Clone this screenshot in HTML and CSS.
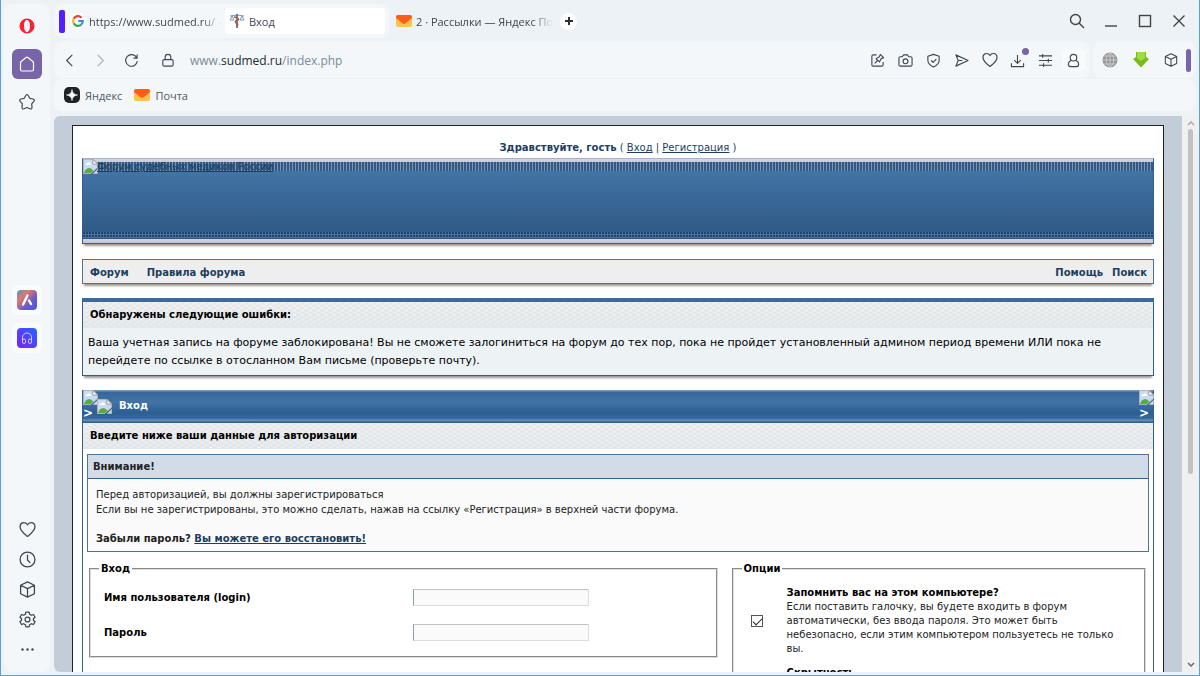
FILE: index.html
```html
<!DOCTYPE html>
<html lang="ru">
<head>
    <meta charset="UTF-8">
    <meta name="viewport" content="width=device-width, initial-scale=1.0">
    <title>Вход</title>
    <link rel="stylesheet" href="styles.css">
</head>
<body>
<svg class="defs" aria-hidden="true">
    <symbol id="i-mail" viewBox="0 0 16 12">
        <rect width="16" height="12" rx="2" fill="#ffc24d"/>
        <path d="M0 3V2Q0 0 2 0H14Q16 0 16 2V3L9.500 8.300Q8 9.500 6.500 8.300Z" fill="#ff5c1a"/>
    </symbol>
    <symbol id="i-broken" viewBox="0 0 16 16">
        <path d="M.5.500H11L15.500 5V9L8 15.500H.5Z" fill="#c9daf8" stroke="#b5b5b5"/>
        <path d="M2.500 6.500Q2.500 4.500 4.500 4.500Q6 2.500 8 4.500Q9.500 5 9 6.500Z" fill="#fff"/>
        <path d="M1 15Q2.500 10 6.500 9.500Q9.500 9.500 11 12.500L8 15Z" fill="#55ad3d"/>
        <path d="M10.500.500V5.500H15.500Z" fill="#fff" stroke="#999"/>
        <path d="M15.500 11V15.500H11Z" fill="#c9daf8" stroke="#b5b5b5"/>
    </symbol>
    <symbol id="i-heart" viewBox="0 0 16 16">
        <path d="M8 14.500C5.500 12.500 1 9.500 1 5.500C1 3 2.700 1.500 4.700 1.500C6.300 1.500 7.400 2.400 8 3.600C8.600 2.400 9.700 1.500 11.300 1.500C13.300 1.500 15 3 15 5.500C15 9.500 10.500 12.500 8 14.500Z"/>
    </symbol>
    <symbol id="i-cube" viewBox="0 0 16 16">
        <path d="M8 .8L14.500 4V12L8 15.200L1.500 12V4ZM1.500 4L8 7.200L14.500 4M8 7.200V15"/>
    </symbol>
</svg>

<div class="window">
    <aside class="sidebar">
        <button class="side-btn" aria-label="Меню">
            <svg width="16" height="16" viewBox="0 0 16 16"><path fill="#fa1e36" fill-rule="evenodd" d="M8 .5A7.500 7.500 0 1 1 8 15.500A7.500 7.500 0 1 1 8 .5ZM8 2C6.200 2 5 4.500 5 8S6.200 14 8 14S11 11.500 11 8S9.800 2 8 2Z"/></svg>
        </button>
        <button class="side-btn home" aria-label="Домой">
            <svg class="line" width="18" height="18" viewBox="0 0 18 18"><path d="M2.500 8Q2.500 7 3.500 6.200L8 2.500Q9 1.700 10 2.500L14.500 6.200Q15.500 7 15.500 8V14.500Q15.500 16 14 16H4Q2.500 16 2.500 14.500Z"/></svg>
        </button>
        <button class="side-btn star" aria-label="Закладки">
            <svg class="line" width="18" height="18" viewBox="0 0 18 18"><path d="M7.800 2.500Q9 .5 10.200 2.500L11.800 5.300L15 6Q17.200 6.600 15.800 8.400L13.700 10.800L14 14.200Q14 16.600 11.900 15.800L9 14.500L6.100 15.800Q4 16.600 4 14.200L4.300 10.800L2.200 8.400Q.8 6.600 3 6L6.200 5.300Z"/></svg>
        </button>
        <div class="side-apps">
            <button class="side-btn app" aria-label="Aria">
                <svg width="20" height="20" viewBox="0 0 20 20">
                    <defs><linearGradient id="aria" x1="0" y1="0" x2="1" y2="1"><stop offset="0" stop-color="#3c9be0"/><stop offset=".3" stop-color="#e0796a"/><stop offset=".65" stop-color="#6a5ac8"/><stop offset="1" stop-color="#4a55dd"/></linearGradient></defs>
                    <rect width="20" height="20" rx="4" fill="url(#aria)"/>
                    <path d="M10.500 5.500L6 14.500M12 10.500L14 14" stroke="#fff" stroke-width="2.400" stroke-linecap="round"/>
                </svg>
            </button>
            <button class="side-btn app" aria-label="Плеер">
                <svg width="20" height="20" viewBox="0 0 20 20">
                    <defs><linearGradient id="player" x1="0" y1="1" x2="1" y2="0"><stop offset="0" stop-color="#7a22ff"/><stop offset="1" stop-color="#2564ff"/></linearGradient></defs>
                    <rect width="20" height="20" rx="4" fill="url(#player)"/>
                    <path d="M5.500 13V9.500A4.500 4.500 0 0 1 14.500 9.500V13" fill="none" stroke="#d8c8ff"/>
                    <rect x="5.500" y="11" width="3" height="4.500" rx="1.500" fill="none" stroke="#d8c8ff"/>
                    <rect x="11.500" y="11" width="3" height="4.500" rx="1.500" fill="none" stroke="#d8c8ff"/>
                </svg>
            </button>
        </div>
        <div class="side-bottom">
            <button class="side-small" aria-label="Избранное"><svg class="line" width="17" height="17"><use href="#i-heart"/></svg></button>
            <button class="side-small" aria-label="История"><svg class="line" width="17" height="17" viewBox="0 0 16 16"><circle cx="8" cy="8" r="7"/><path d="M8 3.500V8.500L10.500 11"/></svg></button>
            <button class="side-small" aria-label="Расширения"><svg class="line" width="17" height="17"><use href="#i-cube"/></svg></button>
            <button class="side-small" aria-label="Настройки"><svg class="line" width="17" height="17" viewBox="0 0 16 16"><circle cx="8" cy="8" r="2.300"/><path d="M6.500 1H9.500L10 3L11.600 4L13.600 3.300L15.100 5.900L13.600 7.300V8.700L15.100 10.100L13.600 12.700L11.600 12L10 13L9.500 15H6.500L6 13L4.400 12L2.400 12.700L.9 10.100L2.400 8.700V7.300L.9 5.900L2.400 3.300L4.400 4L6 3Z"/></svg></button>
            <button class="side-small" aria-label="Ещё"><svg width="17" height="17" viewBox="0 0 17 17" fill="#3e474f"><circle cx="3.500" cy="8.500" r="1.200"/><circle cx="8.500" cy="8.500" r="1.200"/><circle cx="13.500" cy="8.500" r="1.200"/></svg></button>
        </div>
    </aside>

    <div class="main">
        <div class="tabs">
            <div class="tab-group">
                <span class="tab-mark"></span>
                <button class="tab google">
                    <span class="favicon"><svg width="12" height="12" viewBox="0 0 12 12" fill="none" stroke-width="2.200"><path d="M9.500 2.700A4.800 4.800 0 0 0 1.700 3.800" stroke="#ea4335"/><path d="M1.700 3.800A4.800 4.800 0 0 0 1.700 8.300" stroke="#fbbc05"/><path d="M1.700 8.300A4.800 4.800 0 0 0 9.300 9.500" stroke="#34a853"/><path d="M9.300 9.500A4.800 4.800 0 0 0 10.800 6H6.200" stroke="#4285f4"/></svg></span>
                    <span class="tab-text">https://www.sudmed.ru/ -</span>
                </button>
                <button class="tab active">
                    <svg width="16" height="16" viewBox="0 0 16 16" fill="none"><path d="M1 3L8 2L15 3M3 3L1 7H5ZM13 3L11 7H15Z" stroke="#7b98b5"/><path d="M8 1V15" stroke="#355b85" stroke-width="1.500"/><path d="M5 4Q11 5 9 7Q5 8 7 10Q10 11 8 13" stroke="#b4573c" stroke-width="1.400"/></svg>
                    <span>Вход</span>
                </button>
            </div>
            <button class="tab mail">
                <svg width="16" height="12"><use href="#i-mail"/></svg>
                <span class="tab-text">2 · Рассылки — Яндекс По</span>
            </button>
            <button class="new-tab" aria-label="Новая вкладка"><svg width="8" height="8" viewBox="0 0 8 8"><path d="M4 0V8M0 4H8" stroke="#26323a" stroke-width="2"/></svg></button>
            <div class="window-controls">
                <button aria-label="Поиск"><svg width="16" height="16" viewBox="0 0 16 16"><circle cx="6.500" cy="6.500" r="5"/><path d="M10 10L15 15"/></svg></button>
                <button aria-label="Свернуть"><svg width="16" height="16" viewBox="0 0 16 16"><path d="M2 13H14"/></svg></button>
                <button aria-label="Развернуть"><svg width="16" height="16" viewBox="0 0 16 16"><rect x="2.500" y="2.500" width="11" height="11"/></svg></button>
                <button aria-label="Закрыть"><svg width="16" height="16" viewBox="0 0 16 16"><path d="M2.500 2.500L13.500 13.500M13.500 2.500L2.500 13.500"/></svg></button>
            </div>
        </div>

        <div class="toolbar">
            <div class="address">
                <button class="tool" aria-label="Назад"><svg class="line" width="15" height="15" viewBox="0 0 16 16"><path d="M11 2L5 8L11 14"/></svg></button>
                <button class="tool off" aria-label="Вперёд"><svg class="line" width="15" height="15" viewBox="0 0 16 16"><path d="M5 2L11 8L5 14"/></svg></button>
                <button class="tool" aria-label="Обновить"><svg class="line" width="15" height="15" viewBox="0 0 16 16"><path d="M13.500 5A6.200 6.200 0 1 0 14.200 8.500M14 1.500V5.500H10"/></svg></button>
                <button class="tool lock" aria-label="Сведения о сайте"><svg class="line" width="15" height="15" viewBox="0 0 16 16"><rect x="3" y="7" width="11" height="7" rx="1.500"/><path d="M5.500 7V4.500A3 3 0 0 1 11.500 4.500V7"/></svg></button>
                <span class="url">www.<b>sudmed.ru</b>/index.php</span>
                <div class="tools">
                    <button class="tool" aria-label="Заметка"><svg class="line" width="15" height="15" viewBox="0 0 16 16"><path d="M7 2H3.500Q2 2 2 3.500V12.500Q2 14 3.500 14H12.500Q14 14 14 12.500V9.500M5 11L8 8M11 1.500L14.500 5L12 6L10 9.500L6.500 6L10 4Z"/></svg></button>
                    <button class="tool" aria-label="Снимок"><svg class="line" width="15" height="15" viewBox="0 0 16 16"><path d="M1 5.500Q1 4 2.500 4H4.500L6 2H10L11.500 4H13.500Q15 4 15 5.500V12.500Q15 14 13.500 14H2.500Q1 14 1 12.500Z"/><circle cx="8" cy="8.800" r="2.600"/></svg></button>
                    <button class="tool" aria-label="Защита"><svg class="line" width="15" height="15" viewBox="0 0 16 16"><path d="M8 1.500L14 3.500V8Q14 12 8 15Q2 12 2 8V3.500ZM5.500 8L7.500 10L11 6.500"/></svg></button>
                    <button class="tool" aria-label="Отправить"><svg class="line" width="15" height="15" viewBox="0 0 16 16"><path d="M2 2L15 8L2 14L4.500 8ZM4.500 8H9"/></svg></button>
                    <button class="tool" aria-label="Сердце"><svg class="line" width="16" height="16"><use href="#i-heart"/></svg></button>
                    <button class="tool download" aria-label="Загрузки"><svg class="line" width="15" height="15" viewBox="0 0 16 16"><path d="M8 2V11M4.500 7.500L8 11L11.500 7.500M1.500 11V14.500H14.500V11"/></svg></button>
                    <button class="tool" aria-label="Настройка"><svg class="line" width="15" height="15" viewBox="0 0 16 16"><path d="M1 3H15M1 8H15M1 13H15M5 1V5M11 6V10M6 11V15"/></svg></button>
                    <button class="tool person" aria-label="Профиль"><svg class="line" width="15" height="15" viewBox="0 0 16 16"><circle cx="8" cy="5" r="3.500"/><path d="M5 8Q2.500 9.500 2.500 12Q2.500 14.500 5 14.500H11Q13.500 14.500 13.500 12Q13.500 9.500 11 8"/></svg></button>
                </div>
            </div>
            <div class="extensions">
                <button class="tool" aria-label="Глобус"><svg width="16" height="16" viewBox="0 0 16 16"><circle cx="8" cy="8" r="7.500" fill="#969696"/><path d="M.5 8H15.500M2 4H14M2 12H14M8 .5V15.500M8 .5C3 4 3 12 8 15.500M8 .5C13 4 13 12 8 15.500" fill="none" stroke="#d5d5d5" stroke-width=".8"/></svg></button>
                <button class="tool" aria-label="Скачать"><svg width="16" height="16" viewBox="0 0 16 16"><path d="M3 0H13V5L16 7L8 15.500L0 7L3 5Z" fill="#79bb1d"/><path d="M4 0H12V6L8 9L4 6Z" fill="#a2dc45"/></svg></button>
                <button class="tool" aria-label="Расширения"><svg class="line" width="14" height="14"><use href="#i-cube"/></svg></button>
                <span class="side-mark"></span>
            </div>
        </div>

        <nav class="bookmarks">
            <a href="#"><svg width="16" height="16" viewBox="0 0 16 16"><rect width="16" height="16" rx="5" fill="#202225"/><path d="M8 2.500Q8.500 7.500 13.500 8Q8.500 8.500 8 13.500Q7.500 8.500 2.500 8Q7.500 7.500 8 2.500Z" fill="#fff" stroke="#fff" stroke-width=".6"/></svg>Яндекс</a>
            <a href="#"><svg width="16" height="12"><use href="#i-mail"/></svg>Почта</a>
        </nav>

        <div class="viewport">
            <div class="page">
                <div class="wrapper">
                    <div class="greeting"><b>Здравствуйте, гость</b> ( <a href="#">Вход</a> | <a href="#">Регистрация</a> )</div>

                    <header class="banner">
                        <a href="#" class="logo"><svg width="15" height="15"><use href="#i-broken"/></svg><span>Форум судебных медиков России</span></a>
                    </header>

                    <nav class="menu">
                        <a href="#">Форум</a>
                        <a href="#">Правила форума</a>
                        <a href="#" class="help">Помощь</a>
                        <a href="#">Поиск</a>
                    </nav>

                    <section class="errors">
                        <h2 class="subtitle">Обнаружены следующие ошибки:</h2>
                        <p>Ваша учетная запись на форуме заблокирована! Вы не сможете залогиниться на форум до тех пор, пока не пройдет установленный админом период времени ИЛИ пока не перейдете по ссылке в отосланном Вам письме (проверьте почту).</p>
                    </section>

                    <section class="login">
                        <div class="login-title">
                            <span class="edge"><svg width="15" height="15"><use href="#i-broken"/></svg>&gt;</span>
                            <svg width="15" height="15"><use href="#i-broken"/></svg>
                            <h1>Вход</h1>
                            <span class="edge"><svg width="15" height="15"><use href="#i-broken"/></svg>&gt;</span>
                        </div>
                        <h2 class="subtitle">Введите ниже ваши данные для авторизации</h2>

                        <div class="notice">
                            <h3>Внимание!</h3>
                            <div class="notice-body">
                                <p>Перед авторизацией, вы должны зарегистрироваться<br>Если вы не зарегистрированы, это можно сделать, нажав на ссылку «Регистрация» в верхней части форума.</p>
                                <p><b>Забыли пароль? <a href="#">Вы можете его восстановить!</a></b></p>
                            </div>
                        </div>

                        <form class="forms">
                            <fieldset class="account">
                                <legend>Вход</legend>
                                <div class="row">
                                    <label for="login">Имя пользователя (login)</label>
                                    <input type="text" id="login">
                                </div>
                                <div class="row">
                                    <label for="password">Пароль</label>
                                    <input type="password" id="password">
                                </div>
                            </fieldset>
                            <fieldset class="options">
                                <legend>Опции</legend>
                                <div class="option">
                                    <input type="checkbox" id="remember" checked>
                                    <label for="remember"><b>Запомнить вас на этом компьютере?</b><br>Если поставить галочку, вы будете входить в форум автоматически, без ввода пароля. Это может быть небезопасно, если этим компьютером пользуетесь не только вы.</label>
                                </div>
                                <div class="option">
                                    <input type="checkbox" id="hidden">
                                    <label for="hidden"><b>Скрытность</b></label>
                                </div>
                            </fieldset>
                        </form>
                    </section>
                </div>
            </div>
            <div class="scrollbar">
                <svg width="8" height="6" viewBox="0 0 8 6"><path d="M1 5L4 2L7 5" fill="none" stroke="#aaa" stroke-width="1.500"/></svg>
                <span class="thumb"></span>
                <svg width="8" height="6" viewBox="0 0 8 6"><path d="M1 1L4 4L7 1" fill="none" stroke="#666" stroke-width="1.500"/></svg>
            </div>
        </div>
    </div>
</div>
</body>
</html>
```
FILE: styles.css
```css
* {
    box-sizing: border-box;
}

body {
    margin: 0;
    font-family: "Open Sans", "Noto Sans", sans-serif;
    font-size: 11px;
    color: #3e474f;
    background-color: #edf2f6;
}

h1, h2, h3, p {
    margin: 0;
    font-size: inherit;
}

button {
    display: flex;
    align-items: center;
    justify-content: center;
    padding: 0;
    border: none;
    background: none;
    font: inherit;
    color: inherit;
    cursor: pointer;
}

svg {
    flex: none;
}

.defs {
    position: absolute;
    width: 0;
    height: 0;
}

.line {
    fill: none;
    stroke: #3e474f;
    stroke-width: 1.2;
    stroke-linejoin: round;
}

.window {
    display: flex;
    height: 100vh;
    overflow: hidden;
    border: 1px solid #5b9fd6;
    border-top: none;
    padding-bottom: 3px;
}

/* sidebar */
.sidebar {
    display: flex;
    flex-direction: column;
    align-items: center;
    flex: none;
    width: 46px;
    margin: 4px 4px 0 3px;
    padding: 7px 0 8px;
    background-color: #f3f7fa;
    border-radius: 8px;
}

.side-btn {
    width: 30px;
    height: 30px;
    border-radius: 6px;
    margin-bottom: 8px;
}

.home {
    background-color: #7864a8;
}

.home .line {
    stroke: #fff;
}

.side-apps {
    margin: auto 0;
    padding-top: 7px;
}

.app {
    background-color: #f9fbfc;
}

.side-bottom {
    display: flex;
    flex-direction: column;
}

.side-small {
    width: 30px;
    height: 30px;
}

/* tabs */
.main {
    display: flex;
    flex-direction: column;
    flex: 1;
    min-width: 0;
}

.tabs {
    display: flex;
    align-items: center;
    height: 42px;
    flex: none;
}

.tab-group {
    display: flex;
    align-items: center;
    gap: 4px;
    height: 34px;
    padding: 0 4px 0 5px;
    background-color: #f3f7fa;
    border-radius: 8px;
}

.tab-mark {
    width: 6px;
    height: 23px;
    border-radius: 2px;
    background-color: #5020ff;
}

.tab {
    justify-content: flex-start;
    gap: 4px;
    height: 26px;
    border-radius: 4px;
}

.tab-text {
    white-space: nowrap;
    -webkit-mask-image: linear-gradient(to right, #000 85%, transparent);
    mask-image: linear-gradient(to right, #000 85%, transparent);
}

.google {
    width: 152px;
    gap: 3px;
}

.favicon {
    display: flex;
    padding: 2px;
    border-radius: 8px;
    background-color: #fff;
    margin-left: 1px;
}

.active {
    width: 160px;
    padding-left: 4px;
    background-color: #fff;
}

.mail {
    width: 152px;
    margin-left: 7px;
}

.new-tab {
    width: 17px;
    height: 17px;
    margin-left: 12px;
    background-color: #fff;
    border-radius: 50%;
}

.window-controls {
    display: flex;
    gap: 18px;
    margin-left: auto;
    padding-right: 12px;
}

.window-controls svg {
    fill: none;
    stroke: #444;
    stroke-width: 1.4;
}

/* toolbar */
.toolbar {
    display: flex;
    gap: 3px;
    height: 36px;
    flex: none;
    padding-right: 4px;
}

.address, .extensions {
    display: flex;
    align-items: center;
    background-color: #f3f7fa;
    border-radius: 8px;
}

.address {
    flex: 1;
    padding: 0 5px 0 4px;
}

.tool {
    width: 22px;
    height: 22px;
    margin-right: 9px;
}

.off {
    opacity: 0.4;
}

.lock {
    margin: 0 12px 0 5px;
}

.url {
    font-size: 12px;
    color: #7c8b96;
}

.url b {
    font-weight: normal;
    color: #222b31;
}

.tools {
    display: flex;
    gap: 5px;
    margin-left: auto;
}

.tools .tool {
    margin: 0;
    width: 23px;
}

.download {
    position: relative;
}

.download::after {
    content: "";
    position: absolute;
    top: -1px;
    right: 0;
    width: 7px;
    height: 7px;
    border-radius: 50%;
    background-color: #7864a8;
}

.person {
    background-color: #f9fbfc;
    border-radius: 4px;
}

.extensions {
    padding: 0 4px 0 6px;
}

.extensions .tool:nth-child(3) {
    width: 20px;
    margin-right: 5px;
}

.side-mark {
    width: 5px;
    height: 23px;
    border-radius: 3px;
    background-color: #7864a8;
}

.bookmarks {
    display: flex;
    align-items: center;
    gap: 12px;
    flex: none;
    height: 32px;
    margin: 1px 4px 5px 0;
    padding-left: 10px;
    background-color: #f3f7fa;
    border-radius: 8px;
}

.bookmarks a {
    display: flex;
    align-items: center;
    gap: 5px;
    color: #4f5961;
    text-decoration: none;
}

/* forum page */
.viewport {
    display: flex;
    flex: 1;
    min-height: 0;
    overflow: hidden;
    border-radius: 6px 0 0 6px;
    background-color: #c2cdd9;
}

.page {
    flex: 1;
    padding: 9px 18px 0;
    overflow: hidden;
    font-family: Verdana, "DejaVu Sans", sans-serif;
    font-size: 10px;
    color: #222;
}

.page a {
    color: #1c3e60;
}

.wrapper {
    min-height: 100%;
    padding: 14px 9px 0;
    background-color: #fff;
    border: 1px solid #222;
    border-bottom: none;
}

.greeting {
    text-align: center;
    line-height: 16px;
    margin-bottom: 2px;
    color: #1c3e60;
}

.banner {
    height: 86px;
    margin-bottom: 15px;
    border: 1px solid #30608f;
    border-top-color: #a6b0c6;
    background:
        linear-gradient(#d5d8e6, #c5cada) 0 0 / 100% 3px no-repeat,
        repeating-linear-gradient(to right, #305985 0 2px, #7895b5 2px 3px) 0 3px / 100% 9px no-repeat,
        linear-gradient(#cdd2df, #c0c6d4) 0 100% / 100% 4px no-repeat,
        repeating-linear-gradient(transparent 0 2px, #4d7199 2px 3px) 0 73px / 100% 6px no-repeat,
        repeating-linear-gradient(to right, #21446e 0 2px, #46709c 2px 3px) 0 73px / 100% 6px no-repeat,
        linear-gradient(#4579ab, #2d5581);
}

.banner, .menu, .errors {
    box-shadow: 0 4px 2px -2px #999;
}

.logo {
    display: flex;
    align-items: center;
    line-height: 15px;
}

.logo span {
    margin-left: -1px;
}

.menu {
    display: flex;
    align-items: center;
    height: 25px;
    padding: 1px 6px 0 7px;
    margin-bottom: 14px;
    border: 1px solid #4c7398;
    background-color: #eee;
}

.menu a {
    font-weight: bold;
    text-decoration: none;
    margin-right: 18px;
}

.menu .help {
    margin-left: auto;
    margin-right: 9px;
}

.menu .help + a {
    margin-right: 0;
}

.subtitle {
    height: 26px;
    padding-left: 7px;
    line-height: 26px;
    color: #000;
    background:
        repeating-linear-gradient(150deg, transparent 0 2px, rgba(190, 200, 205, 0.15) 2px 4px),
        repeating-linear-gradient(30deg, transparent 0 2px, rgba(190, 200, 205, 0.12) 2px 4px),
        linear-gradient(#f2f2f2, #e9edef);
}

.errors {
    margin-bottom: 14px;
    border: 1px solid #30608f;
    border-top: 4px solid #3b6b9b;
    background-color: #edf2f5;
}

.errors p {
    padding: 6px 5px 5px;
    font-size: 11px;
    line-height: 18px;
    color: #000;
}

.login {
    border: 1px solid #30608f;
    border-top: none;
}

.login-title {
    display: flex;
    align-items: center;
    height: 33px;
    color: #fff;
    background: linear-gradient(#719bbe 0 1px, #36679a 2px, #4174a5 12px, #2c5e94 23px, #376b9f 29px, #729bc0 30px, #34608e 32px);
}

.login-title h1 {
    margin-left: 7px;
    margin-right: auto;
    padding-bottom: 3px;
}

.edge {
    display: flex;
    flex-direction: column;
    width: 14px;
    height: 33px;
    font-size: 12px;
    font-weight: bold;
    line-height: 16px;
}

.notice {
    margin: 5px 4px 10px;
    border: 1px solid #4a749c;
    background-color: #fafafa;
}

.notice h3 {
    height: 24px;
    padding-left: 5px;
    line-height: 24px;
    background-color: #d1dce8;
    border-bottom: 1px solid #30608f;
}

.notice-body {
    padding: 8px 8px 5px;
    line-height: 15px;
}

.notice-body p + p {
    margin-top: 14px;
}

.forms {
    display: grid;
    grid-template-columns: 91fr 60fr;
    gap: 14px;
    align-items: start;
    padding: 0 7px 0 6px;
}

fieldset {
    min-width: 0;
    margin: 0;
    padding: 0;
    border: 2px groove #ddd;
}

legend {
    padding: 0 2px;
    font-weight: bold;
    line-height: 14px;
    color: #000;
}

.account {
    padding: 4px 13px 6px;
}

.account legend {
    margin-left: -5px;
}

.row {
    display: grid;
    grid-template-columns: 309px 1fr;
    align-items: center;
    height: 35px;
    font-weight: bold;
    color: #000;
}

.row input {
    width: 176px;
    height: 17px;
    padding: 0 4px;
    border: 1px solid #ddd;
    border-top-color: #c0c4c8;
    border-left-color: #8e9fae;
    background-color: #fafafa;
}

.options {
    padding: 10px 20px 6px 17px;
}

.options legend {
    margin-left: -9px;
}

.option {
    display: flex;
    align-items: center;
    gap: 24px;
    min-height: 70px;
    margin-bottom: 10px;
    line-height: 14px;
}

.option label {
    align-self: flex-start;
}

.option b {
    color: #000;
}

.option input {
    appearance: none;
    flex: none;
    width: 12px;
    height: 12px;
    margin: 0;
    border: 1px solid #555;
    background-color: #fff;
}

.option input:checked::before {
    content: "";
    display: block;
    width: 8px;
    height: 4px;
    margin: 2px 1px;
    border-left: 1px solid #222;
    border-bottom: 1px solid #222;
    transform: rotate(-45deg);
}

.scrollbar {
    display: flex;
    flex-direction: column;
    align-items: center;
    flex: none;
    width: 17px;
    padding: 4px 0 4px;
    background-color: #f0f0f0;
}

.thumb {
    width: 5px;
    height: 63%;
    margin: 3px 0 auto;
    border-radius: 3px;
    background-color: #c1c1c1;
}
```
